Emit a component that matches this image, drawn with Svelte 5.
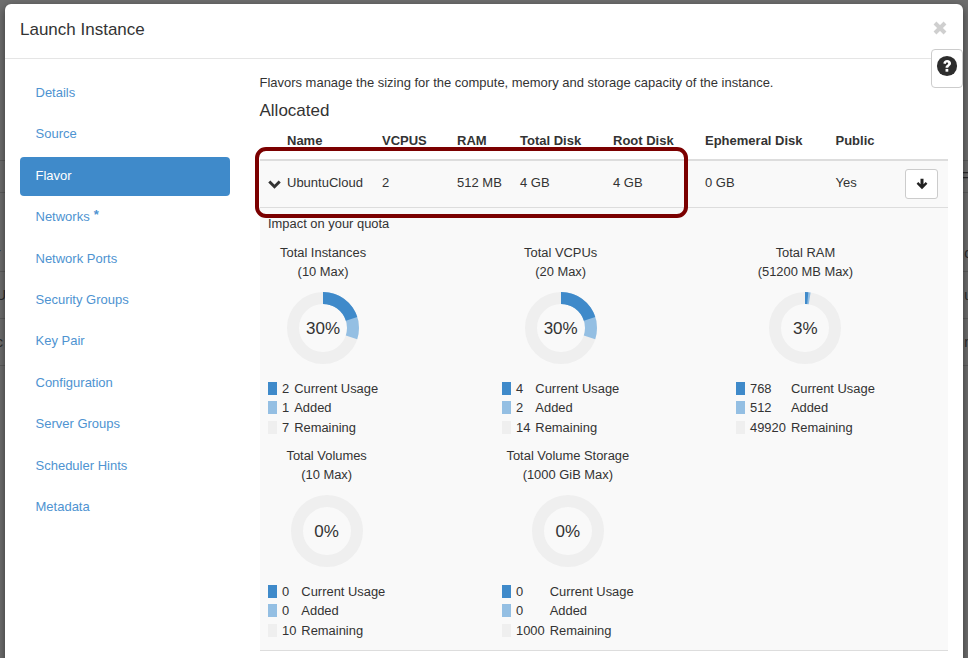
<script lang="ts">
  // Launch Instance wizard, Flavor step, over the dimmed instances page.
  type Legend = { value: number; label: string };
  type Quota = { title: string; max: string; pct: number; used: number; added: number; rows: Legend[] };

  const steps = [
    'Details', 'Source', 'Flavor', 'Networks', 'Network Ports', 'Security Groups',
    'Key Pair', 'Configuration', 'Server Groups', 'Scheduler Hints', 'Metadata',
  ];

  const legend = (a: number, b: number, c: number): Legend[] => [
    { value: a, label: 'Current Usage' },
    { value: b, label: 'Added' },
    { value: c, label: 'Remaining' },
  ];

  const quotas: Quota[] = [
    { title: 'Total Instances', max: '10 Max', pct: 30, used: 20, added: 10, rows: legend(2, 1, 7) },
    { title: 'Total VCPUs', max: '20 Max', pct: 30, used: 20, added: 10, rows: legend(4, 2, 14) },
    { title: 'Total RAM', max: '51200 MB Max', pct: 3, used: 1.5, added: 1, rows: legend(768, 512, 49920) },
    { title: 'Total Volumes', max: '10 Max', pct: 0, used: 0, added: 0, rows: legend(0, 0, 10) },
    { title: 'Total Volume Storage', max: '1000 GiB Max', pct: 0, used: 0, added: 0, rows: legend(0, 0, 1000) },
  ];

  // dimmed page behind the modal: only the clipped row edges show
  const pageRows = [
    { h: 161, left: '', right: '' },
    { h: 32, left: '', right: 'Fl' },
    { h: 79, left: 'r', right: 'o', low: true },
    { h: 47, left: 'U', right: 'u' },
    { h: 47, left: 'c', right: 'n' },
  ];

  const R = 30;
  const C = 2 * Math.PI * R;
</script>

<div class="page">
  {#each pageRows as row}
    <div class="page-row" class:low={row.low} style="height: {row.h}px">
      <span class="edge-left">{row.left}</span>
      <span class="edge-right">{row.right}</span>
    </div>
  {/each}
</div>

<div class="modal">
  <header>
    <h2>Launch Instance</h2>
    <button class="close" aria-label="Close">
      <svg viewBox="0 0 14 14" width="14" height="14"><path d="M2 2 12 12M12 2 2 12" stroke="#cfcfcf" stroke-width="4" /></svg>
    </button>
  </header>
  <button class="help" aria-label="Help">
    <svg viewBox="0 0 24 24" width="22" height="22">
      <circle cx="12" cy="12" r="11" fill="#2d2d2d" />
      <path d="M8 9.400C8.200 6.900 9.900 5.500 12.200 5.500 14.600 5.500 16.400 6.900 16.400 9.100 16.400 10.700 15.500 11.500 14.500 12.200 13.600 12.800 13.400 13.200 13.400 14H10.400C10.400 12.400 11 11.600 12 10.900 12.800 10.400 13.300 10 13.300 9.400 13.300 8.700 12.800 8.300 12.100 8.300 11.300 8.300 10.800 8.800 10.700 9.700Z" fill="#fff" />
      <rect x="10.400" y="15.200" width="3" height="3" fill="#fff" />
    </svg>
  </button>
  <div class="body">
    <nav>
      {#each steps as step}
        <a class:active={step === 'Flavor'} href="#{step}">
          {step}{#if step === 'Networks'}<span class="req">*</span>{/if}
        </a>
      {/each}
    </nav>
    <main>
      <p class="intro">Flavors manage the sizing for the compute, memory and storage capacity of the instance.</p>
      <h3>Allocated</h3>
      <div class="table">
        <div class="row head">
          <span>Name</span><span>VCPUS</span><span>RAM</span><span>Total Disk</span><span>Root Disk</span><span>Ephemeral Disk</span><span>Public</span><span></span>
        </div>
        <div class="row flavor">
          <span class="name">
            <svg class="chevron" viewBox="0 0 13 9" width="13" height="9"><path d="M1.300 1.500 6.500 6.700 11.700 1.500" fill="none" stroke="#333" stroke-width="3" /></svg>
            UbuntuCloud
          </span>
          <span>2</span><span>512 MB</span><span>4 GB</span><span>4 GB</span><span>0 GB</span><span>Yes</span>
          <span class="action">
            <button aria-label="Deallocate">
              <svg viewBox="0 0 12 12" width="12" height="12"><path d="M6 11.200 .6 5.800 2.300 4.100 4.500 6.300V.8H7.500V6.300L9.700 4.100 11.400 5.800Z" fill="#222" /></svg>
            </button>
          </span>
        </div>
        <div class="highlight"></div>
        <div class="details">
          <div class="impact">Impact on your quota</div>
          <div class="charts">
            {#each quotas as q}
              <div class="chart">
                <div class="title">{q.title}<br />({q.max})</div>
                <div class="donut">
                  <svg viewBox="0 0 72 72" width="72" height="72">
                    <circle cx="36" cy="36" r={R} fill="none" stroke="#efefef" stroke-width="12" />
                    {#if q.added > 0}
                      <circle cx="36" cy="36" r={R} fill="none" stroke="#94bfe3" stroke-width="12" transform="rotate(-90 36 36)"
                        stroke-dasharray="{(C * (q.used + q.added)) / 100} {C}" />
                    {/if}
                    {#if q.used > 0}
                      <circle cx="36" cy="36" r={R} fill="none" stroke="#3f8aca" stroke-width="12" transform="rotate(-90 36 36)"
                        stroke-dasharray="{(C * q.used) / 100} {C}" />
                    {/if}
                  </svg>
                  <span>{q.pct}%</span>
                </div>
                <div class="legend">
                  {#each q.rows as r, i}
                    <i class="swatch s{i}"></i>
                    <span>{r.value}</span>
                    <span>{r.label}</span>
                  {/each}
                </div>
              </div>
            {/each}
          </div>
        </div>
      </div>
    </main>
  </div>
</div>

<style>
  :global(body) {
    margin: 0;
    background: #6e6e6e;
    overflow: hidden;
    font-family: "Liberation Sans", Arial, sans-serif;
    color: #333;
  }

  .page {
    height: 658px;
    overflow: hidden;
  }

  .page-row {
    display: flex;
    justify-content: space-between;
    align-items: center;
    box-sizing: border-box;
    border-bottom: 1px solid #5c5c5c;
    font-size: 14px;
    color: #2a2a2a;
  }

  .page-row.low {
    align-items: flex-end;
    padding-bottom: 10px;
  }

  .edge-left {
    margin-left: -4px;
  }

  .edge-right {
    margin-right: -4px;
  }

  .modal {
    position: absolute;
    left: 5px;
    top: 4px;
    width: 958px;
    height: 720px;
    background: #fff;
    border-radius: 6px;
    box-sizing: border-box;
    box-shadow: 0 3px 9px rgba(0, 0, 0, 0.5);
  }

  header {
    height: 52px;
    padding: 0 16px 2px 15px;
    border-bottom: 1px solid #e5e5e5;
    display: flex;
    align-items: center;
    justify-content: space-between;
  }

  h2 {
    margin: 0;
    font-size: 17px;
    font-weight: 400;
    color: #333;
  }

  .close {
    border: 0;
    background: none;
    padding: 0;
    display: flex;
    margin-top: -5px;
  }

  .help {
    position: absolute;
    left: 926px;
    top: 45px;
    width: 32px;
    height: 39px;
    padding: 5px 0 0;
    background: #fff;
    border: 1px solid #ccc;
    border-radius: 4px;
    display: flex;
    justify-content: center;
    box-sizing: border-box;
  }

  .body {
    display: flex;
    padding: 0 15px;
    gap: 30px;
  }

  nav {
    width: 210px;
    flex-shrink: 0;
    display: flex;
    flex-direction: column;
    gap: 2px;
    font-size: 13px;
    padding-top: 15px;
  }

  nav a {
    display: block;
    height: 39.4px;
    line-height: 37px;
    padding: 0 15.5px;
    border-radius: 4px;
    color: #4e93d1;
    text-decoration: none;
  }

  nav a.active {
    background: #3f8aca;
    color: #fff;
  }

  .req {
    margin-left: 4px;
    font-weight: 700;
    line-height: 0;
    vertical-align: 2px;
  }

  main {
    flex: 1;
    min-width: 0;
    padding-top: 13.5px;
  }

  .intro {
    margin: 0 0 0 -0.5px;
    font-size: 12.97px;
    line-height: 19px;
  }

  h3 {
    margin: 7.5px 0 0 -0.5px;
    font-size: 17px;
    font-weight: 400;
    line-height: 24px;
  }

  .table {
    position: relative;
    width: 688px;
    font-size: 13px;
  }

  .row {
    display: grid;
    grid-template-columns: 122px 75px 63px 93px 92px 130.5px 69.5px 1fr;
    align-items: center;
  }

  .row > span:first-child {
    padding-left: 27px;
  }

  .head {
    height: 35px;
    padding-bottom: 1px;
    font-weight: 700;
    border-bottom: 2px solid #ddd;
  }

  .flavor {
    height: 46px;
    background: #f9f9f9;
    border-bottom: 1px solid #ddd;
  }

  .flavor > span {
    margin-top: -3px;
  }

  .flavor > .action {
    margin-top: 0;
  }

  .name {
    position: relative;
  }

  .chevron {
    position: absolute;
    left: 8px;
    top: 5px;
  }

  .action button {
    width: 33px;
    height: 30px;
    background: #fff;
    border: 1px solid #ccc;
    border-radius: 3px;
    padding: 0;
    display: flex;
    align-items: center;
    justify-content: center;
  }

  .highlight {
    position: absolute;
    left: -5px;
    top: 24px;
    width: 433px;
    height: 71px;
    border: 4px solid #7b0000;
    border-radius: 11px;
    box-sizing: border-box;
  }

  .details {
    background: #f9f9f9;
    padding: 8px 8px 0;
    height: 443px;
    border-bottom: 1px solid #ddd;
    box-sizing: border-box;
    font-size: 12.92px;
    line-height: 19px;
  }

  .impact {
    line-height: 16px;
  }

  .charts {
    display: grid;
    grid-template-columns: 234px 234px 1fr;
    margin-top: 10.5px;
  }

  .chart {
    height: 203px;
    width: fit-content;
  }

  .title {
    text-align: center;
    white-space: nowrap;
  }

  .donut {
    position: relative;
    width: 72px;
    height: 72px;
    margin: 11.5px auto 14.25px;
  }

  .donut svg {
    display: block;
  }

  .donut span {
    position: absolute;
    inset: 0;
    display: flex;
    align-items: center;
    justify-content: center;
    font-size: 17px;
  }

  .legend {
    display: grid;
    grid-template-columns: auto auto auto;
    grid-auto-rows: 19.5px;
    column-gap: 5px;
    align-items: center;
    white-space: nowrap;
  }

  .swatch {
    width: 9px;
    height: 13px;
  }

  .s0 { background: #3f8aca; }
  .s1 { background: #94bfe3; }
  .s2 { background: #efefef; }
</style>
